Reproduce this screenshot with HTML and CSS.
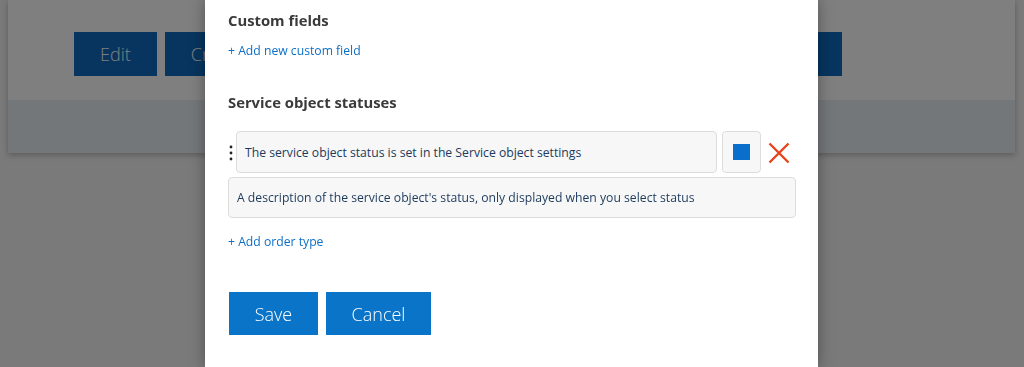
FILE: index.html
```html
<!DOCTYPE html>
<html lang="en">
<head>
  <meta charset="UTF-8">
  <title>Service object statuses</title>
  <link rel="stylesheet" href="styles.css">
</head>
<body>

  <div class="card">
    <div class="card-actions">
      <button class="action-btn">Edit</button>
      <button class="action-btn">Create</button>
      <button class="action-btn push-right">Delete</button>
    </div>
    <div class="card-footer"></div>
  </div>

  <div class="overlay"></div>

  <div class="modal">
    <h3 class="section-title">Custom fields</h3>
    <a class="add-link" href="#">+ Add new custom field</a>

    <h3 class="section-title statuses-title">Service object statuses</h3>

    <div class="status-row">
      <div class="drag-handle">
        <svg width="4" height="16" viewBox="0 0 4 16">
          <circle cx="2" cy="2" r="1.4" fill="#222"/>
          <circle cx="2" cy="8" r="1.4" fill="#222"/>
          <circle cx="2" cy="14" r="1.4" fill="#222"/>
        </svg>
      </div>
      <div class="field status-name">The service object status is set in the Service object settings</div>
      <div class="color-btn"><span class="swatch"></span></div>
      <div class="remove-btn">
        <svg width="22" height="22" viewBox="0 0 22 22">
          <path d="M1.5 1.5 L20.5 20.5 M20.5 1.5 L1.5 20.5" stroke="#e8431b" stroke-width="2.4" fill="none"/>
        </svg>
      </div>
    </div>
    <div class="field status-desc">A description of the service object's status, only displayed when you select status</div>

    <a class="add-link order-link" href="#">+ Add order type</a>

    <div class="modal-actions">
      <button class="primary-btn btn-save">Save</button>
      <button class="primary-btn btn-cancel">Cancel</button>
    </div>
  </div>

</body>
</html>
```

FILE: styles.css
```css
* {
  box-sizing: border-box;
}

body {
  font-family: 'Open Sans', sans-serif;
  margin: 0;
  padding: 0 0 0 8px;
  background: #f4f4f4;
  height: 367px;
  overflow: hidden;
}

.card {
  width: 1007px;
  background: #ffffff;
  box-shadow: 0 2px 6px rgba(0, 0, 0, 0.25);
}

.card-actions {
  display: flex;
  gap: 8px;
  padding: 32px 173px 24px 66px;
}

.action-btn {
  height: 44px;
  padding: 0 26px;
  background: #0e6abe;
  color: #ffffff;
  border: none;
  font-family: 'Open Sans', sans-serif;
  font-size: 18px;
  font-weight: 300;
}

.push-right {
  margin-left: auto;
}

.card-footer {
  height: 53px;
  background: #e8eef4;
}

.overlay {
  position: fixed;
  top: 0;
  left: 0;
  width: 100%;
  height: 100%;
  background: rgba(0, 0, 0, 0.5);
}

.modal {
  position: absolute;
  top: 0;
  left: 205px;
  width: 613px;
  height: 367px;
  background: #ffffff;
  padding: 8px 22px 0 23px;
  box-shadow: 0 0 14px rgba(0, 0, 0, 0.35);
}

.section-title {
  margin: 0;
  font-size: 14.8px;
  font-weight: 700;
  line-height: 24px;
  color: #3a3a3a;
}

.statuses-title {
  margin-top: 30px;
}

.add-link {
  display: block;
  margin-top: 10px;
  font-size: 12.2px;
  line-height: 18px;
  color: #0b6fc7;
  text-decoration: none;
}

.status-row {
  display: flex;
  align-items: center;
  margin-top: 17px;
}

.drag-handle {
  width: 8px;
  display: flex;
  padding-left: 1px;
  padding-top: 2px;
}

.field {
  background: #f7f7f7;
  border: 1px solid #dcdcdc;
  border-radius: 4px;
  font-size: 12.2px;
  color: #1c3a5c;
  padding: 0 8px;
  display: flex;
  align-items: center;
}

.status-name {
  width: 481px;
  height: 42px;
}

.color-btn {
  width: 39px;
  height: 42px;
  margin-left: 5px;
  border: 1px solid #dcdcdc;
  border-radius: 4px;
  background: #f7f7f7;
  display: flex;
  align-items: center;
  justify-content: center;
}

.swatch {
  width: 17px;
  height: 16px;
  background: #0a6fca;
}

.remove-btn {
  display: flex;
  margin-left: 7px;
  margin-top: 1px;
}

.status-desc {
  width: 568px;
  height: 41px;
  margin-top: 4px;
}

.order-link {
  margin-top: 15px;
}

.modal-actions {
  display: flex;
  gap: 8px;
  margin-top: 41px;
  padding-left: 1px;
}

.primary-btn {
  height: 43px;
  background: #0a74c9;
  color: #ffffff;
  border: none;
  font-family: 'Open Sans', sans-serif;
  font-size: 18px;
  font-weight: 300;
}

.btn-save { width: 89px; }
.btn-cancel { width: 105px; }
```
